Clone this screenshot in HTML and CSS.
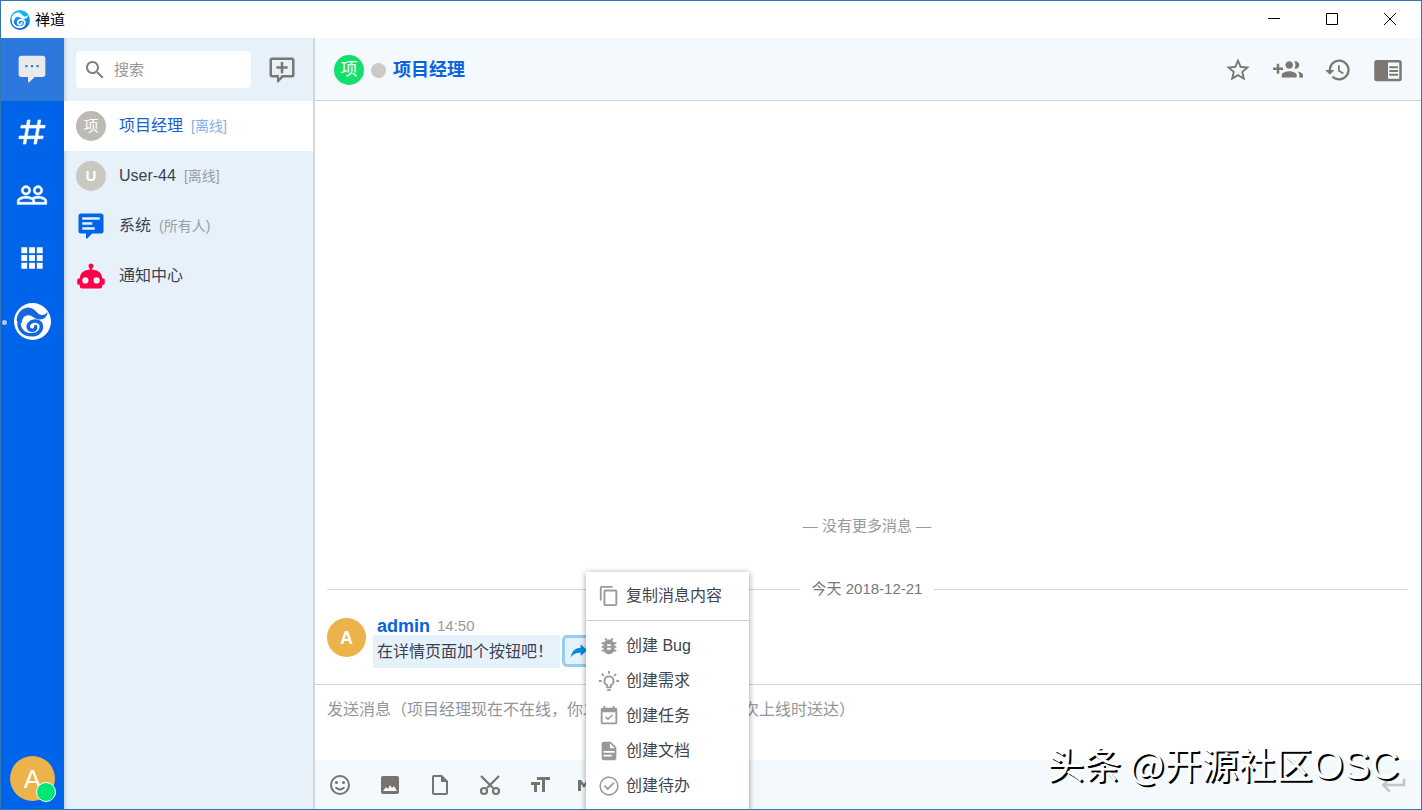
FILE: index.html
```html
<!DOCTYPE html>
<html lang="zh-CN">
<head>
<meta charset="utf-8">
<title>禅道</title>
<link rel="stylesheet" href="styles.css">
</head>
<body>
<svg class="defs" aria-hidden="true">
  <defs>
    <linearGradient id="brand" x1="0" y1="0" x2="0" y2="1"><stop offset="0" stop-color="#16c4f4"/><stop offset="1" stop-color="#0a5de8"/></linearGradient>
    <symbol id="wave" viewBox="0 0 36 36">
      <path d="M2.500 17C3 9 9 4 15 4.500c6 .500 7 6 11 7 3 .500 5-.500 6.500-3C33 13 29 16.500 24 16c-5-.500-6-4-10-4-4 0-6 3-6.500 7.500-2-.500-4-1.500-5-2.500z"/>
      <path class="swirl" d="M5 18C4 25 9 31 17 31c7 0 10.500-5 9.500-9.500-1-4-7-5-10.500-2.500-4 3-2 7.500 1.500 7.500 2.500 0 4-1.500 3.500-3.500"/>
    </symbol>
  </defs>
</svg>
<div class="window">
  <header class="titlebar">
    <svg class="brand" viewBox="0 0 36 36"><circle cx="18" cy="18" r="18" fill="url(#brand)"/><use href="#wave"/></svg>
    <h1 class="title">禅道</h1>
    <div class="window-buttons">
      <button aria-label="最小化"><svg viewBox="0 0 12 12"><path d="M0 5.500h12"/></svg></button>
      <button aria-label="最大化"><svg viewBox="0 0 12 12"><path d="M.5.5h11v11H.5z"/></svg></button>
      <button aria-label="关闭"><svg viewBox="0 0 12 12"><path d="M0 0l12 12M12 0L0 12"/></svg></button>
    </div>
  </header>
  <div class="app">
    <nav class="rail">
      <button class="rail-item active" aria-label="聊天"><svg class="i32" viewBox="0 0 24 24"><path d="M4 2h16a2 2 0 0 1 2 2v12a2 2 0 0 1-2 2h-6l-4 4H9v-4H4a2 2 0 0 1-2-2V4a2 2 0 0 1 2-2m3 7v1.600h1.600V9zm4.200 0v1.600h1.600V9zm4.200 0v1.600H17V9z"/></svg></button>
      <button class="rail-item bold" aria-label="频道"><svg class="i32" viewBox="0 0 24 24"><path d="M5.410 21L6.120 17H2.120L2.470 15H6.470L7.530 9H3.530L3.880 7H7.880L8.590 3H10.590L9.880 7H15.880L16.590 3H18.590L17.880 7H21.880L21.530 9H17.530L16.470 15H20.470L20.120 17H16.120L15.410 21H13.410L14.120 17H8.120L7.410 21H5.410M9.530 9L8.470 15H14.470L15.530 9H9.530Z"/></svg></button>
      <button class="rail-item bold" aria-label="联系人"><svg class="i32" viewBox="0 0 24 24"><path d="M16.500 13c-1.200 0-3.070.340-4.500 1-1.430-.670-3.300-1-4.500-1C5.330 13 1 14.080 1 16.250V19h22v-2.750c0-2.170-4.330-3.250-6.500-3.250zm-4 4.500h-10v-1.250c0-.540 2.560-1.750 5-1.750s5 1.210 5 1.750v1.250zm9 0H14v-1.250c0-.460-.200-.860-.520-1.220.880-.300 1.960-.530 3.020-.530 2.440 0 5 1.210 5 1.750v1.250zM7.500 12c1.930 0 3.500-1.570 3.500-3.500S9.430 5 7.500 5 4 6.570 4 8.500 5.570 12 7.500 12zm0-5.500c1.100 0 2 .900 2 2s-.900 2-2 2-2-.900-2-2 .900-2 2-2zm9 5.500c1.930 0 3.500-1.570 3.500-3.500S18.430 5 16.500 5 13 6.570 13 8.500s1.570 3.500 3.500 3.500zm0-5.500c1.100 0 2 .900 2 2s-.900 2-2 2-2-.900-2-2 .900-2 2-2z"/></svg></button>
      <button class="rail-item" aria-label="应用"><svg class="i32" viewBox="0 0 24 24"><path d="M4 4h4.400v4.400H4zm5.800 0h4.400v4.400H9.800zm5.800 0H20v4.400h-4.400zM4 9.800h4.400v4.400H4zm5.800 0h4.400v4.400H9.800zm5.800 0H20v4.400h-4.400zM4 15.600h4.400V20H4zm5.800 0h4.400V20H9.800zm5.800 0H20V20h-4.400z"/></svg></button>
      <button class="rail-item pinned" aria-label="禅道"><svg class="i37" viewBox="0 0 36 36"><circle cx="18" cy="18" r="18" fill="#fff"/><use href="#wave"/></svg></button>
      <button class="me" aria-label="我的状态">A</button>
    </nav>
    <aside class="chats">
      <div class="search-row">
        <label class="search"><svg class="i24" viewBox="0 0 24 24"><path d="M15.500 14h-.790l-.280-.270C15.410 12.590 16 11.110 16 9.500 16 5.910 13.090 3 9.500 3S3 5.910 3 9.500 5.910 16 9.500 16c1.610 0 3.090-.590 4.230-1.570l.270.280v.790l5 4.990L20.490 19l-4.990-5zm-6 0C7.010 14 5 11.990 5 9.500S7.010 5 9.500 5 14 7.010 14 9.500 11.990 14 9.500 14z"/></svg><input type="text" placeholder="搜索" aria-label="搜索"></label>
        <button class="new-chat" aria-label="新建聊天"><svg class="i30" viewBox="0 0 24 24"><path d="M20 2H4a2 2 0 0 0-2 2v12a2 2 0 0 0 2 2h4v4h1l4-4h7a2 2 0 0 0 2-2V4a2 2 0 0 0-2-2m0 14h-8l-2.500 2.500V16H4V4h16zM11 5.500V9H7.500v2H11v3.500h2V11h3.500V9H13V5.500z"/></svg></button>
      </div>
      <ul class="chat-list">
        <li><button class="chat active"><span class="avatar">项</span>项目经理<small>[离线]</small></button></li>
        <li><button class="chat"><span class="avatar light">U</span>User-44<small>[离线]</small></button></li>
        <li><button class="chat"><svg class="i30 blue" viewBox="0 0 24 24"><path d="M4 2h16a2 2 0 0 1 2 2v12a2 2 0 0 1-2 2h-7l-4 4H8v-4H4a2 2 0 0 1-2-2V4a2 2 0 0 1 2-2m1 3v2h14V5zm0 4v2h8V9zm0 4v2h10v-2z"/></svg>系统<small>(所有人)</small></button></li>
        <li><button class="chat"><svg class="i30 red" viewBox="0 0 24 24"><path d="M12 2a2 2 0 0 1 1 3.730V7h1a7 7 0 0 1 7 7h1a1 1 0 0 1 1 1v3a1 1 0 0 1-1 1h-1v1a2 2 0 0 1-2 2H5a2 2 0 0 1-2-2v-1H2a1 1 0 0 1-1-1v-3a1 1 0 0 1 1-1h1a7 7 0 0 1 7-7h1V5.730A2 2 0 0 1 12 2M7.500 13a2.500 2.500 0 1 0 0 5 2.500 2.500 0 0 0 0-5m9 0a2.500 2.500 0 1 0 0 5 2.500 2.500 0 0 0 0-5z"/></svg>通知中心</button></li>
      </ul>
    </aside>
    <main class="conversation">
      <header class="chat-header">
        <span class="avatar green">项</span><span class="dot"></span><h2>项目经理</h2>
        <div class="tools">
          <button aria-label="收藏"><svg class="i28" viewBox="0 0 24 24"><path d="M22 9.240l-7.190-.620L12 2 9.190 8.630 2 9.240l5.460 4.730L5.820 21 12 17.270 18.180 21l-1.630-7.030L22 9.240zM12 15.400l-3.760 2.270 1-4.280-3.320-2.880 4.380-.380L12 6.100l1.710 4.040 4.380.380-3.320 2.880 1 4.280L12 15.400z"/></svg></button>
          <button aria-label="邀请"><svg class="i30" viewBox="0 0 24 24"><path d="M8 10H5V7H3v3H0v2h3v3h2v-3h3v-2zm10 1c1.660 0 2.990-1.340 2.990-3S19.660 5 18 5c-.320 0-.630.050-.910.140.570.810.900 1.790.900 2.860s-.340 2.040-.900 2.860c.280.090.590.140.910.140zm-5 0c1.660 0 2.990-1.340 2.990-3S14.660 5 13 5s-3 1.340-3 3 1.340 3 3 3zm6.620 2.160c.830.730 1.380 1.660 1.380 2.840v2h3v-2c0-1.540-2.370-2.490-4.380-2.840zM13 13c-2 0-6 1-6 3v2h12v-2c0-2-4-3-6-3z"/></svg></button>
          <button aria-label="历史"><svg class="i28" viewBox="0 0 24 24"><path d="M13 3a9 9 0 0 0-9 9H1l3.890 3.890.070.140L9 12H6a7 7 0 1 1 2.060 4.940l-1.420 1.420A9 9 0 1 0 13 3zm-1 5v5l4.280 2.540.720-1.210-3.500-2.080V8z"/></svg></button>
          <button aria-label="侧栏"><svg class="i30" viewBox="0 0 24 24"><path d="M3 4h18a2 2 0 0 1 2 2v13a2 2 0 0 1-2 2H3a2 2 0 0 1-2-2V6a2 2 0 0 1 2-2m9 2v13h9V6zm1 3h7v1.500h-7zm0 3h7v1.500h-7zm0 3h7v1.500h-7z"/></svg></button>
        </div>
      </header>
      <section class="messages">
        <p class="no-more">— 没有更多消息 —</p>
        <div class="date"><span>今天 2018-12-21</span></div>
        <article class="message">
          <span class="avatar admin">A</span>
          <div class="body">
            <div class="meta"><strong>admin</strong><time>14:50</time></div>
            <div class="line"><p>在详情页面加个按钮吧！</p>
              <div class="share-wrap">
                <button class="share" aria-label="转发"><svg class="i24" viewBox="0 0 24 24"><path d="M14 4l8 7-8 7v-4c-5 0-9 1-12 6C3 13 7 8 14 8z"/></svg></button>
                <div class="menu" role="menu">
                  <button role="menuitem"><svg class="i22" viewBox="0 0 24 24"><path d="M16 1H4a2 2 0 0 0-2 2v14h2V3h12zm3 4H8a2 2 0 0 0-2 2v14c0 1.100.900 2 2 2h11a2 2 0 0 0 2-2V7a2 2 0 0 0-2-2zm0 16H8V7h11z"/></svg>复制消息内容</button>
                  <hr>
                  <button role="menuitem"><svg class="i22" viewBox="0 0 24 24"><path d="M20 8h-2.810a6 6 0 0 0-1.820-1.960L17 4.410 15.590 3l-2.170 2.170a6 6 0 0 0-2.830 0L8.410 3 7 4.410l1.620 1.630A6 6 0 0 0 6.810 8H4v2h2.090L6 11v1H4v2h2v1l.090 1H4v2h2.810a6 6 0 0 0 10.380 0H20v-2h-2.090l.090-1v-1h2v-2h-2v-1l-.090-1H20zm-6 8h-4v-2h4zm0-4h-4v-2h4z"/></svg>创建 Bug</button>
                  <button role="menuitem"><svg class="i22" viewBox="0 0 24 24"><path d="M12 6a6 6 0 0 1 3 11.200V19a1 1 0 0 1-1 1h-4a1 1 0 0 1-1-1v-1.800A6 6 0 0 1 12 6m2 15v1a1 1 0 0 1-1 1h-2a1 1 0 0 1-1-1v-1zm6-10h3v2h-3zM1 11h3v2H1zM13 1v3h-2V1zM4.920 3.500l2.130 2.140-1.420 1.410L3.500 4.930zm12.030 2.130l2.120-2.130 1.430 1.430-2.130 2.120zM12 8a4 4 0 0 0-1 7.870V18h2v-2.130A4 4 0 0 0 12 8z"/></svg>创建需求</button>
                  <button role="menuitem"><svg class="i22" viewBox="0 0 24 24"><path d="M19 3h-1V1h-2v2H8V1H6v2H5a2 2 0 0 0-2 2v14a2 2 0 0 0 2 2h14a2 2 0 0 0 2-2V5a2 2 0 0 0-2-2m0 16H5V8h14zm-2.500-7.900l-1.100-1.100-4.500 4.500-2.100-2.100-1.100 1.100 3.200 3.200z"/></svg>创建任务</button>
                  <button role="menuitem"><svg class="i22" viewBox="0 0 24 24"><path d="M14 2H6a2 2 0 0 0-2 2v16a2 2 0 0 0 2 2h12a2 2 0 0 0 2-2V8zm1 16H6v-2h9zm3-4H6v-2h12zm-5-5V3.500L18.500 9z"/></svg>创建文档</button>
                  <button role="menuitem"><svg class="i22" viewBox="0 0 24 24"><path d="M12 1.500a10.500 10.500 0 1 0 0 21 10.500 10.500 0 0 0 0-21m0 1.700a8.800 8.800 0 1 1 0 17.600 8.800 8.800 0 0 1 0-17.600m4.800 4.600L10.600 14l-3-3-1.300 1.300 4.300 4.300 7.500-7.500z"/></svg>创建待办</button>
                </div>
              </div>
            </div>
          </div>
        </article>
      </section>
      <footer class="composer">
        <textarea aria-label="发送消息" placeholder="发送消息（项目经理现在不在线，你发送的消息会在对方下次上线时送达）"></textarea>
        <div class="toolbar">
          <button aria-label="表情"><svg class="i24" viewBox="0 0 24 24"><path d="M12 2a10 10 0 1 0 0 20 10 10 0 0 0 0-20m0 2a8 8 0 1 1 0 16 8 8 0 0 1 0-16m3.500 4a1.500 1.500 0 1 0 0 3 1.500 1.500 0 0 0 0-3m-7 0a1.500 1.500 0 1 0 0 3 1.500 1.500 0 0 0 0-3M6.900 14a5.500 5.500 0 0 0 10.200 0h-2a4 4 0 0 1-6.200 0z"/></svg></button>
          <button aria-label="图片"><svg class="i24" viewBox="0 0 24 24"><path d="M21 19V5a2 2 0 0 0-2-2H5a2 2 0 0 0-2 2v14a2 2 0 0 0 2 2h14a2 2 0 0 0 2-2M5 18l3-4 2 2 2-4 2 3 2-2 3 5z"/></svg></button>
          <button aria-label="文件"><svg class="i24" viewBox="0 0 24 24"><path d="M14 2H6a2 2 0 0 0-2 2v16a2 2 0 0 0 2 2h12a2 2 0 0 0 2-2V8zM6 20V4h7v5h5v11z"/></svg></button>
          <button aria-label="截图"><svg class="i24 outline" viewBox="0 0 24 24"><path d="M3 3l12 12M21 3L9 15"/><circle cx="6" cy="18" r="3"/><circle cx="18" cy="18" r="3"/></svg></button>
          <button aria-label="字号"><svg class="i24" viewBox="0 0 24 24"><path d="M9 4v3h5v12h3V7h5V4zm-6 8h3v7h3v-7h3V9H3z"/></svg></button>
          <button aria-label="Markdown"><svg class="i24" viewBox="0 0 24 24"><path d="M0 18V7h3l3 4 3-4h3v11H9v-7l-3 4-3-4v7zm14-6h2V7h3v5h2l-3.500 5z"/></svg></button>
          <button class="send" aria-label="发送"><svg class="i30" viewBox="0 0 24 24"><path d="M19 7v4H5.800l3.600-3.600L8 6l-6 6 6 6 1.400-1.400L5.800 13H21V7z"/></svg></button>
        </div>
      </footer>
    </main>
  </div>
  <div class="watermark">头条 @开源社区<span class="latin">OSC</span></div>
</div>
</body>
</html>
```
FILE: styles.css
```css
* { box-sizing: border-box; }
body { margin: 0; font: 16px/24px "Liberation Sans", "Noto Sans CJK SC", sans-serif; color: #3b4252; }
button { margin: 0; padding: 0; border: 0; background: none; font: inherit; color: inherit; }
h1, h2, p, ul { margin: 0; padding: 0; list-style: none; }
svg { display: block; fill: currentColor; flex: none; }
.defs { position: absolute; width: 0; height: 0; }
.i22 { width: 22px; height: 22px; }
.i24 { width: 24px; height: 24px; }
.i28 { width: 28px; height: 28px; }
.i30 { width: 30px; height: 30px; }
.i32 { width: 32px; height: 32px; }
.i37 { width: 37px; height: 37px; }
.outline { fill: none; stroke: currentColor; stroke-width: 2.2; }

.window { position: relative; height: 100vh; border: 1px solid #2f77b5; display: flex; flex-direction: column; overflow: hidden; background: #fff; }
.titlebar { height: 37px; display: flex; align-items: center; padding-left: 9px; gap: 5px; flex: none; }
.brand { width: 20px; height: 20px; color: #fff; }
.swirl { fill: none; stroke: currentColor; stroke-width: 3.4; stroke-linecap: round; }
.title { font-size: 15px; font-weight: 400; color: #000; }
.window-buttons { margin-left: auto; display: flex; padding: 0 2px 2px 0; }
.window-buttons button { width: 58px; height: 34px; display: grid; place-items: center; }
.window-buttons svg { width: 12px; height: 12px; fill: none; stroke: #000; }

.app { flex: 1; display: flex; min-height: 0; }
.rail { width: 63px; background: #0064ea; display: flex; flex-direction: column; color: #fff; flex: none; }
.rail-item { position: relative; height: 63px; padding: 0 1px 1px 0; display: grid; place-items: center; }
.rail-item.active { background: #2d78dd; color: #e9eaec; }
.bold svg { stroke: currentColor; stroke-width: .5; }
.pinned svg { color: #1467dc; }
.pinned::before { content: ""; position: absolute; left: 1px; top: 30px; width: 5px; height: 5px; border-radius: 50%; background: #a5c9f8; }
.me { position: relative; width: 45px; height: 45px; border-radius: 50%; background: #ecb34b; margin: auto auto 8px; font-size: 26px; }
.me::after { content: ""; position: absolute; right: -1px; bottom: -1px; width: 18px; height: 18px; border-radius: 50%; border: 1px solid #fff; background: #00e676; }

.chats { width: 251px; background: #e6f1fa; border-right: 2px solid #cfd8de; flex: none; box-shadow: inset 4px 0 4px -3px #b8c6d2; }
.search-row { height: 63px; padding: 0 16px 0 12px; display: flex; align-items: center; justify-content: space-between; }
.search { width: 175px; height: 37px; background: #fff; border-radius: 4px; display: flex; align-items: center; padding-left: 7px; gap: 7px; color: #808080; }
.search input { width: 120px; border: 0; padding: 0; background: none; font: inherit; font-size: 15px; outline: 0; }
.search input::placeholder { color: #999; opacity: 1; }
.new-chat { color: #7b7771; }
.chat { width: 100%; height: 50px; display: flex; align-items: center; padding: 0 12px; text-align: left; }
.chat > :first-child { margin-right: 13px; }
.chat.active { background: #fff; color: #1a5fd0; }
.chat small { font-size: 14px; color: #98a0a8; margin-left: 8px; }
.chat.active small { color: #86aee6; }
.avatar { width: 30px; height: 30px; border-radius: 50%; background: #bdbab3; color: #fff; font-size: 15px; display: grid; place-items: center; flex: none; }
.avatar.light { background: #cbc7c1; font-weight: 700; }
.avatar.green { background: #13df6d; font-size: 17px; }
.avatar.admin { width: 39px; height: 39px; background: #ecb34b; font-size: 18px; font-weight: 700; }
.blue { color: #0064ea; }
.red { color: #ff0047; }

.conversation { flex: 1; min-width: 0; display: flex; flex-direction: column; }
.chat-header { height: 63px; flex: none; background: #f3f9fc; border-bottom: 1px solid #cfd4d6; display: flex; align-items: center; padding: 2px 18px 0 19px; }
.dot { width: 15px; height: 15px; border-radius: 50%; background: #cdc9c4; margin: 0 7px; }
h2 { font-size: 18px; color: #0a62dc; }
.tools { margin-left: auto; display: flex; gap: 20px; color: #7b7771; }
.tools button { width: 30px; display: grid; place-items: center; }
.messages { flex: 1; padding: 0 14px 16px 12px; display: flex; flex-direction: column; justify-content: flex-end; }
.no-more { text-align: center; color: #999; font-size: 15px; }
.date { display: flex; align-items: center; gap: 12px; color: #777; font-size: 15px; margin: 39px 0 12px; }
.date::before, .date::after { content: ""; flex: 1; height: 1px; background: #d3d6d8; }
.message { display: flex; gap: 7px; align-items: flex-start; }
.message .admin { margin-top: 5px; }
.meta { padding: 4px 0 0 4px; height: 22px; display: flex; gap: 7px; align-items: center; }
.meta strong { color: #0a62dc; font-size: 18px; }
.meta time { color: #999; font-size: 15px; }
.line { display: flex; gap: 2px; }
.line p { background: #e6f2fb; height: 33px; line-height: 33px; padding: 0 4px; width: 187px; white-space: nowrap; }
.share-wrap { position: relative; }
.share { width: 33px; height: 32px; border: 3px solid #92cef5; border-radius: 5px; background: #e6f2fb; color: #078bdc; display: grid; place-items: center; }
.share .i24 { width: 20px; height: 20px; }
.menu { position: absolute; left: 24px; top: -63px; width: 163px; height: 260px; background: #fff; box-shadow: 0 1px 6px rgba(0, 0, 0, .4); padding-top: 6px; }
.menu button { width: 100%; height: 35px; display: flex; align-items: center; gap: 6px; padding-left: 12px; color: #3f4550; }
.menu svg { color: #999; }
.menu hr { margin: 7px 0; border: 0; height: 1px; background: #d0d3d5; }
.composer { height: 125px; border-top: 1px solid #cfd4d6; display: flex; flex-direction: column; flex: none; }
textarea { flex: 1; border: 0; resize: none; outline: 0; padding: 13px 12px 0; font: inherit; }
textarea::placeholder { color: #949699; opacity: 1; }
.toolbar { height: 49px; background: #f3f9fc; display: flex; align-items: center; padding: 0 12px 0 13px; gap: 26px; color: #77736d; }
.send { margin-left: auto; color: #c3c5c6; }
.watermark { position: absolute; right: 22px; bottom: 16px; font: 37px/56px "Noto Sans CJK SC", sans-serif; color: #fff; text-shadow: 2px 2px 0 #000; pointer-events: none; white-space: nowrap; }
.latin { font-family: "Liberation Sans", sans-serif; font-size: 40px; }
```
